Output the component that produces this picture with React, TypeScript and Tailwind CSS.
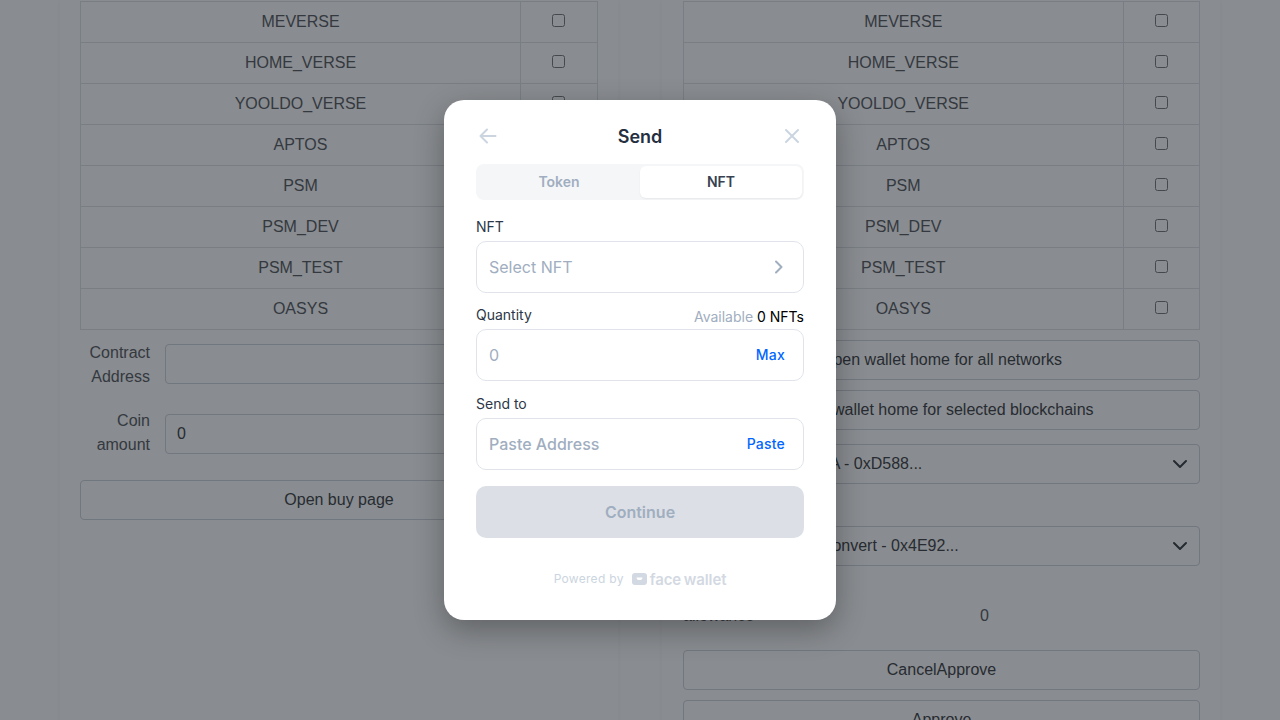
import React from "react";

const chains = ["MEVERSE", "HOME_VERSE", "YOOLDO_VERSE", "APTOS", "PSM", "PSM_DEV", "PSM_TEST", "OASYS"];

function ChainTable({ first, box }: { first: string; box: string }) {
  return (
    <table className="w-full border-collapse table-fixed text-[#55585d]">
      <tbody>
        {chains.map((c) => (
          <tr key={c} className="h-[41px]">
            <td className={`${first} border border-[#dee2e6] text-center align-middle p-0`}>{c}</td>
            <td className="border border-[#dee2e6] text-center align-middle p-0">
              <input type="checkbox" className={`w-[13px] h-[13px] align-middle relative -top-[2px] ${box}`} />
            </td>
          </tr>
        ))}
      </tbody>
    </table>
  );
}

function PageButton({ children, className = "" }: { children: React.ReactNode; className?: string }) {
  return (
    <div className={`h-10 flex items-center justify-center rounded border border-[#ced4da] text-[#3a3d42] ${className}`}>
      {children}
    </div>
  );
}

function PageSelect({ children, className = "" }: { children: React.ReactNode; className?: string }) {
  return (
    <div className={`h-10 flex items-center justify-between pl-[10px] pr-[11px] rounded border border-[#ced4da] text-[#3a3d42] ${className}`}>
      <span>{children}</span>
      <svg width="16" height="16" viewBox="0 0 16 16" fill="none" stroke="#343a40" strokeWidth="2" strokeLinecap="round" strokeLinejoin="round">
        <path d="M2 5l6 6 6-6" />
      </svg>
    </div>
  );
}

function Card({ children, className = "" }: { children: React.ReactNode; className?: string }) {
  return <div className={`w-[558px] h-[760px] shrink-0 bg-white px-5 pt-px shadow-[0_0_6px_rgba(0,0,0,0.05)] ${className}`}>{children}</div>;
}

function ModalField({ placeholder, action, icon, medium }: { placeholder: string; action?: string; icon?: boolean; medium?: boolean }) {
  return (
    <div className="h-[52px] rounded-[10px] border border-[#e0e4ea] flex items-center justify-between pl-3 pr-[18px]">
      <span className={`text-base text-[#a0aec0] ${medium ? "font-medium" : ""}`}>{placeholder}</span>
      {action && <span className="text-sm font-medium tracking-[0.2px] text-[#0066ff]">{action}</span>}
      {icon && (
        <svg width="16" height="16" viewBox="0 0 16 16" fill="none" stroke="#a0aec0" strokeWidth="2" strokeLinecap="round" strokeLinejoin="round" className="-mr-[2px]">
          <path d="M5 2.500L10.500 8 5 13.500" />
        </svg>
      )}
    </div>
  );
}

export default function App() {
  return (
    <div className="relative h-screen overflow-hidden bg-white text-base text-[#3a3d42] font-['Liberation_Sans',Arial,sans-serif]">
      <div className="flex justify-center gap-[44px]">
        <Card>
          <ChainTable first="w-[440px]" box="-left-[0.5px]" />
          <div className="mt-[14px] flex items-start">
            <div className="w-[70px] text-right leading-6 -mt-[3px] text-[#55585d]">Contract Address</div>
            <div className="ml-[15px] flex-1 h-10 rounded border border-[#ced4da]" />
          </div>
          <div className="mt-[25px] flex items-start">
            <div className="w-[70px] text-right leading-6 -mt-[5px] text-[#55585d]">Coin amount</div>
            <div className="ml-[15px] flex-1 h-10 rounded border border-[#ced4da] flex items-center pl-[11px]">0</div>
          </div>
          <PageButton className="mt-[23px]">Open buy page</PageButton>
        </Card>
        <Card className="!pl-[21px]">
          <ChainTable first="w-[439.5px]" box="left-0" />
          <PageButton className="mt-[10px]">Open wallet home for all networks</PageButton>
          <PageButton className="mt-[10px]">Open wallet home for selected blockchains</PageButton>
          <PageSelect className="mt-[14px]">Test Token ERC20 A - 0xD588...</PageSelect>
          <PageSelect className="mt-[42px]">Test Tokens ERC Convert - 0x4E92...</PageSelect>
          <div className="mt-[38px] flex items-center h-6 text-[#55585d]">
            <div className="w-[70px] leading-6 text-center -mt-px">allowance</div>
            <div className="flex-1 text-center pl-[16px]">0</div>
          </div>
          <PageButton className="mt-[22px]">CancelApprove</PageButton>
          <PageButton className="mt-[10px]">Approve</PageButton>
        </Card>
      </div>

      <div className="absolute inset-0 bg-[rgba(19,25,33,0.5)] flex items-center justify-center font-['Inter',sans-serif]">
        <div className="w-[392px] h-[520px] bg-white rounded-[20px] px-8 pt-6 shadow-[0_10px_30px_rgba(0,0,0,0.3)]">
          <div className="h-6 flex items-center justify-between">
            <svg width="24" height="24" viewBox="0 0 24 24" fill="none" stroke="#cbd5e0" strokeWidth="2" strokeLinecap="round" strokeLinejoin="round">
              <path d="M19.500 12h-15M11 5.500L4.500 12l6.500 6.500" />
            </svg>
            <span className="text-lg font-semibold text-[#252f3f] relative top-px">Send</span>
            <svg width="24" height="24" viewBox="0 0 24 24" fill="none" stroke="#cbd5e0" strokeWidth="2" strokeLinecap="round">
              <path d="M6 6l12 12M18 6L6 18" />
            </svg>
          </div>
          <div className="mt-4 h-9 rounded-lg bg-[#f5f6f8] p-0.5 flex text-sm font-semibold">
            <div className="flex-1 flex items-center justify-center text-[#a0aec0]">Token</div>
            <div className="flex-1 flex items-center justify-center bg-white rounded-md text-[#374151] shadow-[0_1px_2px_rgba(0,0,0,0.06)]">NFT</div>
          </div>
          <div className="mt-[17px] text-sm leading-5 text-[#2d3748]">NFT</div>
          <div className="mt-1">
            <ModalField placeholder="Select NFT" icon />
          </div>
          <div className="mt-3 flex justify-between h-6">
            <span className="text-sm leading-5 text-[#2d3748]">Quantity</span>
            <span className="text-sm leading-5 mt-[2px] text-black">
              <span className="text-[#a0aec0]">Available</span> 0 NFTs
            </span>
          </div>
          <ModalField placeholder="0" action="Max" />
          <div className="mt-[13px] text-sm leading-5 text-[#2d3748]">Send to</div>
          <div className="mt-1">
            <ModalField placeholder="Paste Address" action="Paste" medium />
          </div>
          <div className="mt-4 h-[52px] rounded-[10px] bg-[#dce0e6] flex items-center justify-center text-base font-semibold text-[#a0aec0]">
            Continue
          </div>
          <div className="mt-[32px] flex items-center justify-center gap-2 h-[18px]">
            <span className="text-xs tracking-[0.3px] text-[#cbd5e0]">Powered by</span>
            <span className="flex items-center gap-[3px] text-[#d3d9e2]">
              <svg width="15" height="12" viewBox="0 0 15 12">
                <rect width="15" height="12" rx="3" fill="#d3d9e2" />
                <path d="M4.500 4.500h6c0 1.600-1.300 2.600-3 2.600s-3-1-3-2.600z" fill="#ffffff" />
              </svg>
              <span className="text-[15px] leading-none font-semibold tracking-[-0.1px] [word-spacing:-1px]">face wallet</span>
            </span>
          </div>
        </div>
      </div>
    </div>
  );
}
